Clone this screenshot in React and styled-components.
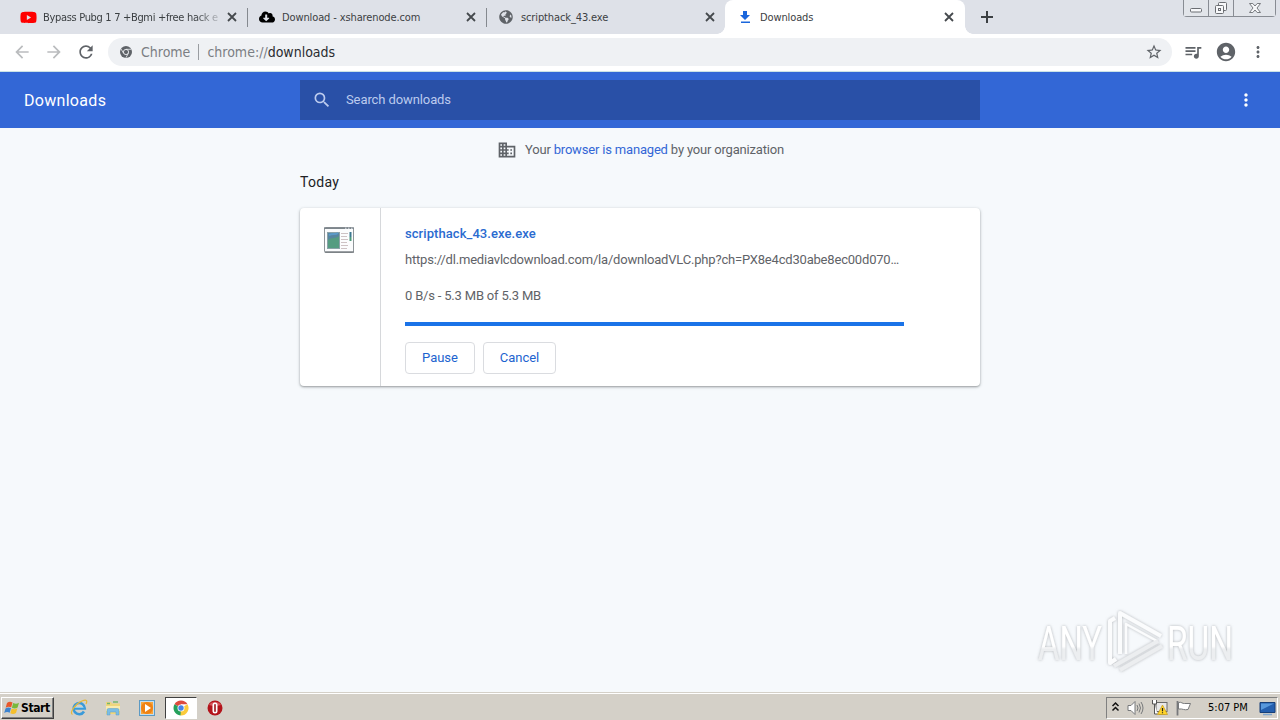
import React from 'react'
import styled, { createGlobalStyle, css } from 'styled-components';
import { MdArrowBack, MdArrowForward, MdRefresh, MdStarBorder, MdQueueMusic, MdAccountCircle, MdMoreVert, MdSearch, MdDomain } from 'react-icons/md';
import { FaYoutube, FaCloudDownloadAlt, FaGlobeAmericas } from 'react-icons/fa';

const tabs = [
    { id: 1, title: 'Bypass Pubg 1 7 +Bgmi +free hack e', icon: <FaYoutube size={17} color="#f00" />, fade: true },
    { id: 2, title: 'Download - xsharenode.com', icon: <FaCloudDownloadAlt size={16} color="#000" />, divider: true },
    { id: 3, title: 'scripthack_43.exe', icon: <FaGlobeAmericas size={14} color="#5f6368" />, divider: true },
    { id: 4, title: 'Downloads', icon: <DownloadIcon />, active: true },
];

function DownloadIcon() {
    return (
        <svg width="16" height="16" viewBox="0 0 16 16" fill="#1a66dc">
            <path d="M6 2h4v4h3L8 11 3 6h3zM4 12.5h9V14H4z" />
        </svg>
    )
}

function CloseIcon() {
    return (
        <svg width="14" height="14" viewBox="0 0 14 14" stroke="#45494d" strokeWidth="1.8">
            <path d="M3 3l8 8M11 3l-8 8" />
        </svg>
    )
}

function PlusIcon() {
    return (
        <svg width="18" height="18" viewBox="0 0 18 18" stroke="#3c4043" strokeWidth="2">
            <path d="M9 3v12M3 9h12" />
        </svg>
    )
}

function ChromeMono() {
    return (
        <svg width="12" height="12" viewBox="0 0 12 12">
            <circle cx="6" cy="6" r="6" fill="#5f6368" />
            <circle cx="6" cy="6" r="2.6" fill="#5f6368" stroke="#eff1f4" strokeWidth="0.9" />
            <path d="M6 3.3h5.3M3.6 7.3L1 2.9M8.3 7.4L5.9 11.8" stroke="#eff1f4" strokeWidth="0.8" />
        </svg>
    )
}

function WindowButtons() {
    return (
        <Caption>
            <CaptionButton $w={24}>
                <svg width="14" height="16" viewBox="0 0 14 16" fill="#f7f8fa" stroke="#6b6e73">
                    <rect x="1.5" y="8.5" width="11" height="3.5" rx="1" />
                </svg>
            </CaptionButton>
            <CaptionButton $w={25}>
                <svg width="14" height="16" viewBox="0 0 14 16" fill="#f7f8fa" stroke="#6b6e73">
                    <rect x="4.5" y="2.5" width="8" height="8" rx="1" />
                    <rect x="1.5" y="5.5" width="8" height="8" rx="1" />
                    <rect x="4.5" y="8.5" width="2" height="2" />
                </svg>
            </CaptionButton>
            <CaptionButton $w={42}>
                <svg width="14" height="16" viewBox="0 0 14 16" fill="#f7f8fa" stroke="#6b6e73" strokeWidth="0.9">
                    <path d="M1.5 3.5h3.3L7 6l2.2-2.5h3.3L9 8l3.5 4.500H9.200L7 10l-2.200 2.500H1.500L5 8z" />
                </svg>
            </CaptionButton>
        </Caption>
    )
}

function ExeIcon() {
    return (
        <svg width="32" height="32" viewBox="0 0 32 32">
            <rect x="1.5" y="3.5" width="29" height="25" rx="1" fill="#fbfcfd" stroke="#8f9599" />
            <path d="M1 4.2h30" stroke="#7d868c" strokeWidth="1.6" />
            <path d="M22 4.2h1.5M25 4.2h1.5M28 4.2h1.5" stroke="#dfe6ec" />
            <path d="M2 28h29" stroke="#747a7e" strokeWidth="1.4" />
            <rect x="4.5" y="8.5" width="12" height="16" fill="#5785a0" stroke="#8ba2a8" />
            <path d="M5 16c4-3 7-1 11-4v12H5z" fill="#559c81" />
            <path d="M6 11c4-2 6 0 9-2" stroke="#5b9ac8" strokeWidth="2" fill="none" />
            <path d="M18 9.5h7M18 12.5h6M18 15.5h7M18 18.5h6M18 21.5h7M18 24.5h6" stroke="#cdc2c4" />
            <path d="M27.5 8v5" stroke="#3c7890" strokeWidth="2" />
            <path d="M27.5 13v4" stroke="#4d9a79" strokeWidth="2" />
        </svg>
    )
}

function Watermark() {
    return (
        <svg width="226" height="80" viewBox="-10 -5 226 80">
            <defs>
                <linearGradient id="fade" x1="0" y1="0" x2="0" y2="1">
                    <stop offset="0.55" stopColor="#fff" />
                    <stop offset="0.6" stopColor="#eceef0" />
                </linearGradient>
                <filter id="glow" x="-10%" y="-20%" width="120%" height="140%">
                    <feDropShadow dx="0" dy="0" stdDeviation="1.5" floodColor="#8b8e92" floodOpacity="0.65" />
                </filter>
            </defs>
            <g filter="url(#glow)" fill="url(#fade)">
                <MarkText x="5" y="55" textLength="64" lengthAdjust="spacingAndGlyphs">ANY</MarkText>
                <MarkText x="134" y="55" textLength="66" lengthAdjust="spacingAndGlyphs">RUN</MarkText>
                <g fill="none" stroke="#fbfcfd" strokeWidth="4" strokeLinejoin="round">
                    <path d="M82 13l-5 3v42l6-4" />
                    <path d="M87 49V8l41 23" />
                    <path d="M93 49V19l31 17" strokeWidth="2.5" />
                    <path d="M81 61l44-25" stroke="#eceef0" />
                    <path d="M87 65l42-24" stroke="#eceef0" />
                </g>
            </g>
        </svg>
    )
}

function StartFlag() {
    return (
        <svg width="16" height="16" viewBox="0 0 16 16">
            <path d="M3 3c2-1.5 3.5-1.5 5.500-.5L7.200 7.300c-2-.9-3.700-.8-5.500.4z" fill="#e8582b" />
            <path d="M9.200 2.900c2 1 3.600 1 5.800-.2l-1.400 4.800c-2 1.200-3.700 1.200-5.700.2z" fill="#79b83b" />
            <path d="M1.500 8.400C3.300 7.200 5 7.100 7 8l-1.300 4.700c-2-.9-3.700-.8-5.500.4z" fill="#3c83cf" />
            <path d="M7.700 8.400c2 1 3.700 1 5.700-.2L12 13c-2 1.200-3.700 1.200-5.700.2z" fill="#f5bf2c" />
        </svg>
    )
}

function ExplorerE() {
    return (
        <svg width="18" height="18" viewBox="0 0 18 18" fill="none">
            <path d="M14 12.5A5.600 5.600 0 1 1 14.800 9.500H4.500" stroke="#3a9ad9" strokeWidth="2.600" />
            <path d="M4.500 8.500h9" stroke="#86cdf3" />
            <path d="M2.500 15.500C-1 14 5 5 12 2c5-2 5.500 0 4 3" stroke="#e6b83a" strokeWidth="1.200" />
        </svg>
    )
}

function FolderIcon() {
    return (
        <svg width="18" height="18" viewBox="0 0 18 18">
            <path d="M2 3h5l1 1.500h8V15H2z" fill="#efd67c" />
            <path d="M3 4.500h3M9 3h5" stroke="#75b56d" strokeWidth="1.500" />
            <path d="M2 7h14v5H2z" fill="#f9ebb0" />
            <path d="M3 16v-5q0-1.500 1.500-1.500h9Q15 9.500 15 11v5h-3v-3H6v3z" fill="#7bbde4" stroke="#5a9fc9" strokeWidth="0.500" />
        </svg>
    )
}

function MediaPlayer() {
    return (
        <svg width="18" height="18" viewBox="0 0 18 18">
            <rect x="1.5" y="1.5" width="15" height="15" fill="#c4def0" stroke="#5c9ac4" />
            <rect x="3" y="3" width="12" height="12" fill="#f7a53c" />
            <circle cx="9" cy="9" r="6" fill="#ef8214" />
            <path d="M7 5v8l6-4z" fill="#fff" />
        </svg>
    )
}

function ChromeColor() {
    return (
        <svg width="16" height="16" viewBox="0 0 16 16">
            <path d="M8 8L1.500 4.250A7.500 7.500 0 0 1 14.500 4.250H8z" fill="#dd4b3e" />
            <path d="M8 8L1.500 4.250A7.500 7.500 0 0 0 7.500 15.500L11 9.500z" fill="#25a05b" />
            <path d="M8 8l6.500-3.750A7.500 7.500 0 0 1 7.500 15.500z" fill="#fbcb3c" />
            <circle cx="8" cy="8" r="3.500" fill="#fff" />
            <circle cx="8" cy="8" r="2.700" fill="#4683e8" />
        </svg>
    )
}

function OperaIcon() {
    return (
        <svg width="16" height="16" viewBox="0 0 16 16">
            <circle cx="8" cy="8" r="7.500" fill="#b3141b" />
            <path d="M2 5a6.500 5 0 0 1 12 0q-6 2-12 0z" fill="#d8545a" />
            <rect x="5.500" y="2.500" width="5" height="11" rx="2.500" fill="#fff" />
            <rect x="7.200" y="4" width="1.600" height="8" rx="0.800" fill="#9c1218" />
        </svg>
    )
}

function TrayIcons() {
    return (
        <>
            <svg width="9" height="14" viewBox="0 0 9 14" fill="none" stroke="#111" strokeWidth="1.500">
                <path d="M1.500 5l3-3 3 3M1.500 9.500l3-3 3 3" />
            </svg>
            <svg width="17" height="16" viewBox="0 0 17 16" fill="none" stroke="#77797b">
                <path d="M1 5.500h3l4-4v13l-4-4H1z" fill="#fff" />
                <path d="M10 5q2 3 0 6M12 3.500q3 4.500 0 9M14 2q4 6 0 12" />
            </svg>
            <svg width="17" height="17" viewBox="0 0 17 17">
                <rect x="5" y="3.500" width="11" height="9" fill="#e8e8e8" stroke="#6a6a6a" />
                <path d="M8 15h6" stroke="#6a6a6a" />
                <path d="M1.500 1v4h4V1M3.500 5v10h3" fill="#fff" stroke="#555" />
                <path d="M11.500 6l5 9.500h-10z" fill="#ffd42a" stroke="#c49a18" strokeWidth="0.700" />
                <path d="M11.500 9v3.300M11.500 13.300v1" stroke="#222" strokeWidth="1.200" />
            </svg>
            <svg width="17" height="16" viewBox="0 0 17 16" stroke="#77797b">
                <path d="M3.500 2.500c3-1 4 1.500 6 1h6L13 9.500c-4 1-5-1-9.500-.5z" fill="#fff" />
                <path d="M2.500 1v14.500" strokeWidth="1.800" />
            </svg>
        </>
    )
}

function App() {
    return (
        <Screen>
            <GlobalStyle />
            <TabStrip>
                {tabs.map((tab) => (
                    <Tab key={tab.id} $active={tab.active} $divider={tab.divider}>
                        <Favicon>{tab.icon}</Favicon>
                        <TabTitle $fade={tab.fade}>{tab.title}</TabTitle>
                        <CloseIcon />
                    </Tab>
                ))}
                <NewTab><PlusIcon /></NewTab>
                <WindowButtons />
            </TabStrip>
            <Toolbar>
                <NavButtons>
                    <MdArrowBack size={20} color="#babcbe" />
                    <MdArrowForward size={20} color="#babcbe" />
                    <MdRefresh size={20} />
                </NavButtons>
                <Omnibox>
                    <ChromeMono />
                    <SiteName>Chrome</SiteName>
                    <Url>chrome://<b>downloads</b></Url>
                    <MdStarBorder size={18} />
                </Omnibox>
                <ToolbarActions>
                    <MdQueueMusic size={20} />
                    <MdAccountCircle size={22} />
                    <MdMoreVert size={18} />
                </ToolbarActions>
            </Toolbar>
            <Header>
                <HeaderTitle>Downloads</HeaderTitle>
                <SearchField>
                    <MdSearch size={20} />
                    <SearchHint>Search downloads</SearchHint>
                </SearchField>
                <HeaderMenu><MdMoreVert size={20} /></HeaderMenu>
            </Header>
            <Content>
                <Managed>
                    <MdDomain size={20} />
                    <p>Your <a>browser is managed</a> by your organization</p>
                </Managed>
                <DateHeading>Today</DateHeading>
                <Card>
                    <FileIcon><ExeIcon /></FileIcon>
                    <Details>
                        <FileName>scripthack_43.exe.exe</FileName>
                        <FileUrl>https://dl.mediavlcdownload.com/la/downloadVLC.php?ch=PX8e4cd30abe8ec00d070…</FileUrl>
                        <Status>0 B/s - 5.3 MB of 5.3 MB</Status>
                        <Progress />
                        <Actions>
                            <Button $w={70}>Pause</Button>
                            <Button $w={73}>Cancel</Button>
                        </Actions>
                    </Details>
                </Card>
                <WatermarkLayer><Watermark /></WatermarkLayer>
            </Content>
            <Taskbar>
                <Start><StartFlag />Start</Start>
                <QuickLaunch>
                    <LaunchItem><ExplorerE /></LaunchItem>
                    <LaunchItem><FolderIcon /></LaunchItem>
                    <LaunchItem><MediaPlayer /></LaunchItem>
                    <LaunchItem $pressed><ChromeColor /></LaunchItem>
                    <LaunchItem><OperaIcon /></LaunchItem>
                </QuickLaunch>
                <Tray>
                    <TrayIcons />
                    <Clock>5:07 PM</Clock>
                    <svg width="17" height="16" viewBox="0 0 17 16">
                        <path d="M1 2.500h15v10H1z" fill="#245fae" stroke="#173f78" />
                        <path d="M2 3.500h13L2 10z" fill="#5798dc" />
                        <path d="M4 14.500h9" stroke="#7fa6cf" strokeWidth="1.500" />
                    </svg>
                </Tray>
            </Taskbar>
        </Screen>
    )
}

const GlobalStyle = createGlobalStyle`
* { box-sizing: border-box; }
body {
    margin: 0;
    overflow: hidden;
}
svg {
    display: block;
    flex: none;
}
p, h1, h2 {
    margin: 0;
    font-weight: 400;
}
`;
const Screen = styled.div`
width: 1280px;
height: 720px;
display: flex;
flex-direction: column;
font-family: Roboto, sans-serif;
font-size: 13px;
color: #5f6368;
white-space: nowrap;
`;
const TabStrip = styled.div`
display: flex;
height: 34px;
padding-left: 8px;
background: #dee1e8;
`;
const Tab = styled.div`
position: relative;
display: flex;
align-items: center;
width: 239px;
height: 34px;
padding: 0 8px 0 12px;
font: 11px "DejaVu Sans Condensed", sans-serif;
letter-spacing: -0.12px;
color: #3c4043;

${({ $divider }) => $divider && css`
    background: linear-gradient(#85898f, #85898f) 0 8px / 1px 19px no-repeat;
`}
${({ $active }) => $active && css`
    width: 240px;
    padding-right: 9px;
    background: #fff;
    border-radius: 8px 8px 0 0;

    &::before, &::after {
        content: "";
        position: absolute;
        bottom: 0;
        width: 8px;
        height: 8px;
        left: -8px;
        background: radial-gradient(circle at 0 0, transparent 7.5px, #fff 8px);
    }
    &::after {
        left: 100%;
        background: radial-gradient(circle at 100% 0, transparent 7.5px, #fff 8px);
    }
`}
`;
const Favicon = styled.div`
display: flex;
align-items: center;
justify-content: center;
width: 16px;
margin-right: 7px;
`;
const TabTitle = styled.div`
flex: 1;
min-width: 0;
line-height: 18px;
padding-top: 1px;
${({ $fade }) => $fade && css`
    letter-spacing: -0.32px;
    mask-image: linear-gradient(to right, #000 152px, transparent 182px);
`}
`;
const NewTab = styled.div`
display: flex;
align-items: center;
margin-left: 13px;
`;
const Caption = styled.div`
display: flex;
height: 17px;
margin-left: auto;
margin-right: 4px;
border: 1px solid #888c93;
border-top: 0;
border-radius: 0 0 4px 4px;
`;
const CaptionButton = styled.div`
display: flex;
align-items: center;
justify-content: center;
width: ${({ $w }) => $w}px;
background: #e2e5ea;

& + & {
    border-left: 1px solid #888c93;
}
`;
const Toolbar = styled.div`
display: flex;
align-items: center;
height: 38px;
padding-bottom: 2px;
background: #fff;
border-bottom: 1px solid #cbe3e6;
`;
const NavButtons = styled.div`
display: flex;
gap: 12px;
width: 108px;
padding-left: 12px;
`;
const Omnibox = styled.div`
display: flex;
align-items: center;
width: 1064px;
height: 28px;
padding: 0 9px 0 12px;
border-radius: 14px;
background: #eff1f4;
font: 14px "DejaVu Sans Condensed", sans-serif;
`;
const SiteName = styled.span`
margin-left: 9px;
padding-right: 8px;
border-right: 1px solid #9a9da1;
line-height: 16px;
color: #7b7e83;
`;
const Url = styled.span`
flex: 1;
margin-left: 8px;
color: #7b7e83;

b {
    font-weight: 400;
    color: #2a2c30;
}
`;
const ToolbarActions = styled.div`
display: flex;
align-items: center;
gap: 12px;
padding-left: 11px;
`;
const Header = styled.header`
display: grid;
grid-template-columns: 300px 680px 1fr;
align-items: center;
height: 56px;
background: #3367d6;
`;
const HeaderTitle = styled.h1`
padding-left: 24px;
font-size: 16px;
letter-spacing: 0.3px;
color: #fff;
`;
const SearchField = styled.div`
display: flex;
align-items: center;
gap: 14px;
height: 40px;
padding-left: 12px;
background: #2950a7;
color: #bccbee;
`;
const SearchHint = styled.span`
padding-bottom: 2px;
letter-spacing: -0.1px;
`;
const HeaderMenu = styled.div`
display: flex;
justify-content: flex-end;
padding-right: 24px;
color: #fff;
`;
const Content = styled.main`
position: relative;
flex: 1;
padding-top: 12px;
background: #f6f9fc;
`;
const Managed = styled.div`
display: flex;
align-items: center;
justify-content: center;
gap: 8px;
height: 20px;
padding-left: 1px;
letter-spacing: -0.18px;

p {
    padding-bottom: 2px;
}
a {
    color: #3367d6;
}
`;
const DateHeading = styled.h2`
width: 680px;
margin: 14px auto 17px;
font-size: 14px;
line-height: 17px;
letter-spacing: 0.3px;
color: #202124;
`;
const Card = styled.section`
display: flex;
width: 680px;
height: 178px;
margin: 0 auto;
background: #fff;
border-radius: 4px;
box-shadow: 0 1px 2px rgba(60, 64, 67, 0.4), 0 1px 3px 1px rgba(60, 64, 67, 0.12);
`;
const FileIcon = styled.div`
width: 81px;
padding: 16px 0 0 23px;
border-right: 1px solid #d6d8db;
`;
const Details = styled.div`
display: flex;
flex-direction: column;
width: 523px;
padding: 16px 0 0 24px;
`;
const FileName = styled.p`
font-weight: 500;
line-height: 20px;
letter-spacing: 0.07px;
color: #2a6bd0;
`;
const FileUrl = styled.p`
margin-top: 6px;
line-height: 20px;
letter-spacing: -0.19px;
`;
const Status = styled.p`
margin-top: 16px;
line-height: 20px;
letter-spacing: -0.19px;
`;
const Progress = styled.div`
height: 4px;
margin-top: 16px;
background: #1a73e8;
`;
const Actions = styled.div`
display: flex;
gap: 8px;
margin-top: 16px;
`;
const Button = styled.button`
width: ${({ $w }) => $w}px;
height: 32px;
padding: 0 0 2px;
border: 1px solid #dadce0;
border-radius: 4px;
background: #fff;
font: 13px Roboto, sans-serif;
color: #1c63cf;
`;
const WatermarkLayer = styled.div`
position: absolute;
right: 31px;
bottom: 12px;
`;
const MarkText = styled.text`
font: 49px Roboto, sans-serif;
`;
const Taskbar = styled.footer`
display: flex;
align-items: center;
height: 28px;
padding: 2px 2px 0 1px;
background: #d4d0c8;
border-top: 1px solid #d4d0c8;
box-shadow: inset 0 1px #fff;
color: #000;
`;
const Start = styled.div`
display: flex;
align-items: center;
gap: 1px;
width: 53px;
height: 22px;
padding-left: 2px;
border: 1px solid;
border-color: #fff #404040 #404040 #fff;
box-shadow: inset -1px -1px #808080;
font: bold 12px "DejaVu Sans Condensed", sans-serif;
letter-spacing: -0.4px;
`;
const QuickLaunch = styled.div`
display: flex;
gap: 2px;
margin-left: 9px;
`;
const LaunchItem = styled.div`
display: flex;
align-items: center;
justify-content: center;
width: 32px;
height: 22px;
${({ $pressed }) => $pressed && css`
    background: #fff;
    border: 1px solid;
    border-color: #404040 #fff #fff #404040;
`}
`;
const Tray = styled.div`
display: flex;
align-items: center;
gap: 7px;
width: 172px;
height: 22px;
margin-left: auto;
padding-left: 4px;
border: 1px solid;
border-color: #808080 #fff #fff #808080;
`;
const Clock = styled.span`
margin: 0 4px 0 9px;
font: 11px "DejaVu Sans Condensed", sans-serif;
`;
export default App;
